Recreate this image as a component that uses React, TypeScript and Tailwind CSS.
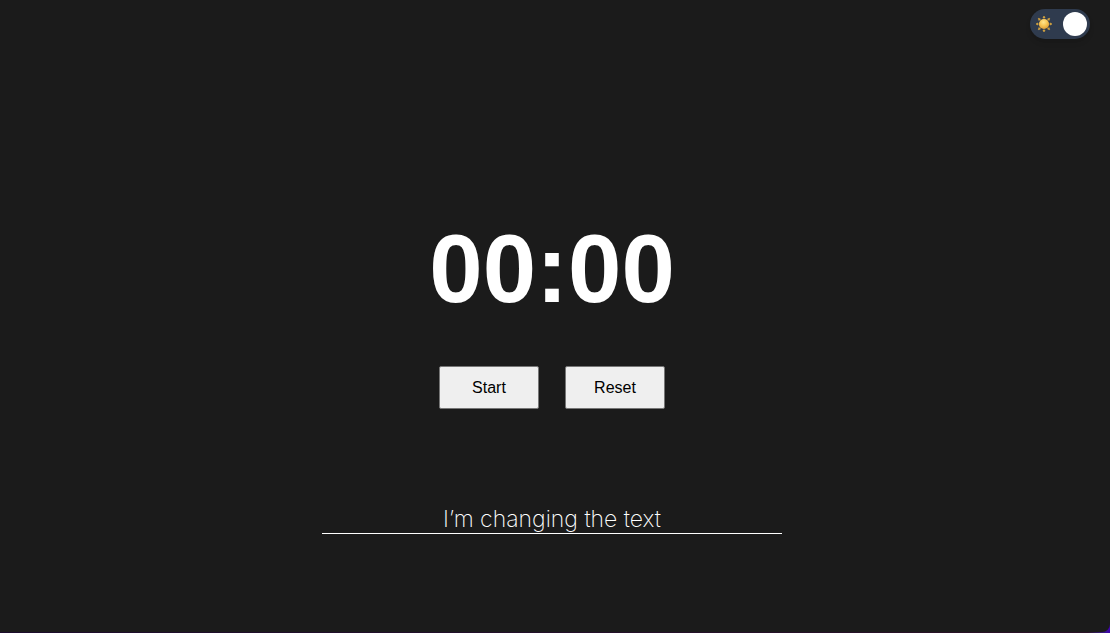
import { useEffect, useState } from "react";

const RAYS = [0, 45, 90, 135, 180, 225, 270, 315];

function SunIcon() {
  return (
    <svg viewBox="0 0 36 36" className="size-4" aria-hidden="true">
      <defs>
        <radialGradient id="sun" cx="45%" cy="32%" r="70%">
          <stop offset="0" stopColor="#ffe58f" />
          <stop offset="0.5" stopColor="#f8c655" />
          <stop offset="1" stopColor="#dc9a35" />
        </radialGradient>
      </defs>
      {RAYS.map((angle) => (
        <path key={angle} d="M18 0 L20.4 4.5 H15.6 Z" fill="#dca83f" stroke="#dca83f" strokeWidth="1.4" transform={`rotate(${angle} 18 18)`} />
      ))}
      <circle cx="18" cy="18" r="11.5" fill="url(#sun)" />
    </svg>
  );
}

export default function App() {
  const [seconds, setSeconds] = useState(0);
  const [running, setRunning] = useState(false);
  const [dark, setDark] = useState(true);
  const [label, setLabel] = useState("I’m changing the text");

  useEffect(() => {
    if (!running) return;
    const id = setInterval(() => setSeconds((s) => s + 1), 1000);
    return () => clearInterval(id);
  }, [running]);

  const pad = (n: number) => String(n).padStart(2, "0");
  const button =
    "h-[43px] w-[100px] rounded-[2px] border border-[#767676] bg-[#efefef] text-base text-black";

  return (
    <div className="flex min-h-screen flex-col bg-linear-to-r from-[#1c0c2c] via-[#2a1226] via-98% to-[#3f00b0] pb-px font-['Liberation_Sans',sans-serif]">
      <div
        className={`flex grow flex-col rounded-br-lg ${dark ? "bg-[#1b1b1b] text-white" : "bg-white text-black"}`}
      >
        <header className="flex justify-end px-5 pt-[9px]">
          <label className="flex h-[30px] w-[60px] cursor-pointer items-center justify-between rounded-full bg-[#2f3b4e] pr-[3px] pl-[6px] shadow-md">
            <input
              type="checkbox"
              className="sr-only"
              aria-label="Dark mode"
              checked={dark}
              onChange={(e) => setDark(e.target.checked)}
            />
            <SunIcon />
            <span className="size-6 rounded-full bg-white" />
          </label>
        </header>
        <main className="flex grow flex-col items-center pt-[182px] pr-[6px]">
          <h1 className="text-8xl font-bold">
            {pad(Math.floor(seconds / 60))}:{pad(seconds % 60)}
          </h1>
          <div className="mt-[49px] flex gap-[26px]">
            <button type="button" className={button} onClick={() => setRunning(!running)}>
              {running ? "Stop" : "Start"}
            </button>
            <button
              type="button"
              className={button}
              onClick={() => {
                setRunning(false);
                setSeconds(0);
              }}
            >
              Reset
            </button>
          </div>
          <input
            type="text"
            aria-label="Timer name"
            value={label}
            onChange={(e) => setLabel(e.target.value)}
            className="mt-[95px] h-[30px] w-5/12 border-b border-current bg-transparent pt-[2px] text-center font-['Inter',sans-serif] text-[23px] font-extralight outline-none"
          />
        </main>
      </div>
    </div>
  );
}
